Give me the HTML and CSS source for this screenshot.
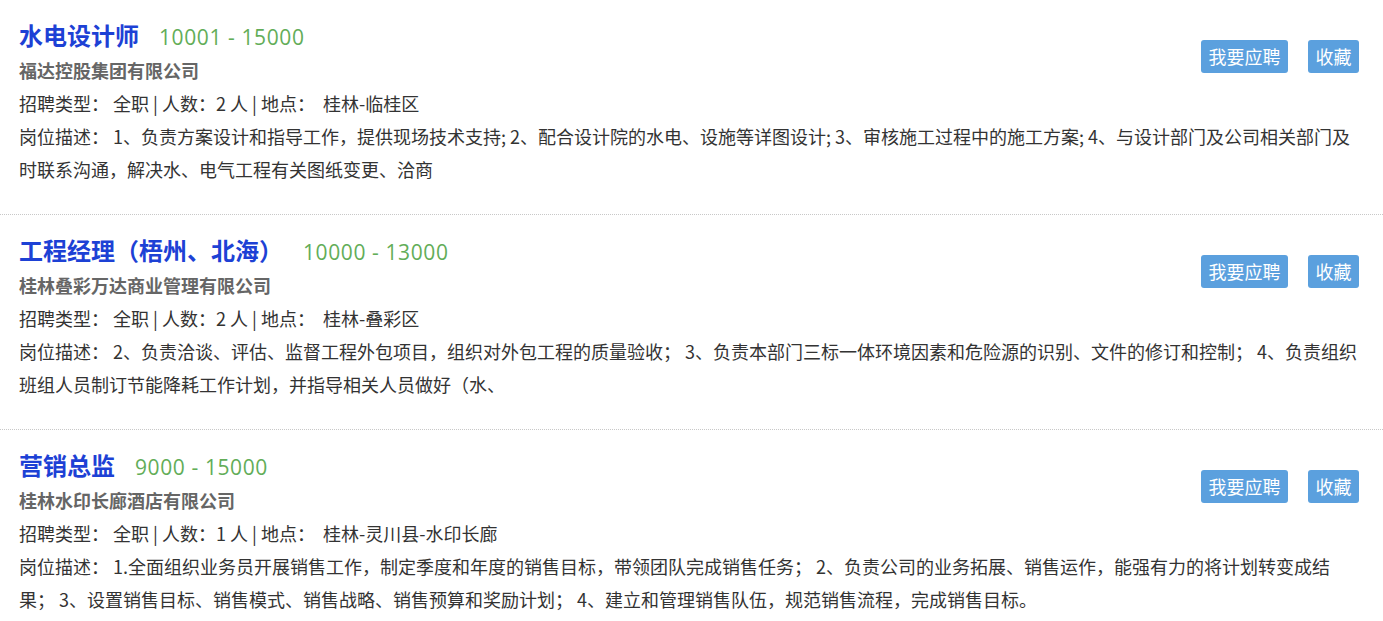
FILE: index.html
```html
<!DOCTYPE html>
<html lang="zh-CN">
<head>
  <meta charset="UTF-8">
  <title>招聘信息</title>
  <meta name="viewport" content="width=device-width, initial-scale=1">
  <link rel="stylesheet" href="styles.css">
</head>
<body>
  <ul class="job-list">
    <li class="job">
      <div class="job-head">
        <h2 class="job-title">水电设计师<span class="salary">10001 - 15000</span></h2>
        <div class="company">福达控股集团有限公司</div>
      </div>
      <div class="job-actions">
        <a class="btn" href="#">我要应聘</a>
        <a class="btn" href="#">收藏</a>
      </div>
      <div class="job-meta">招聘类型： 全职 | 人数：2 人 | 地点：&nbsp; 桂林-临桂区</div>
      <div class="job-desc">岗位描述： 1、负责方案设计和指导工作，提供现场技术支持; 2、配合设计院的水电、设施等详图设计; 3、审核施工过程中的施工方案; 4、与设计部门及公司相关部门及时联系沟通，解决水、电气工程有关图纸变更、洽商</div>
    </li>
    <li class="job">
      <div class="job-head">
        <h2 class="job-title">工程经理（梧州、北海）<span class="salary">10000 - 13000</span></h2>
        <div class="company">桂林叠彩万达商业管理有限公司</div>
      </div>
      <div class="job-actions">
        <a class="btn" href="#">我要应聘</a>
        <a class="btn" href="#">收藏</a>
      </div>
      <div class="job-meta">招聘类型： 全职 | 人数：2 人 | 地点：&nbsp; 桂林-叠彩区</div>
      <div class="job-desc">岗位描述： 2、负责洽谈、评估、监督工程外包项目，组织对外包工程的质量验收； 3、负责本部门三标一体环境因素和危险源的识别、文件的修订和控制； 4、负责组织班组人员制订节能降耗工作计划，并指导相关人员做好（水、</div>
    </li>
    <li class="job">
      <div class="job-head">
        <h2 class="job-title">营销总监<span class="salary">9000 - 15000</span></h2>
        <div class="company">桂林水印长廊酒店有限公司</div>
      </div>
      <div class="job-actions">
        <a class="btn" href="#">我要应聘</a>
        <a class="btn" href="#">收藏</a>
      </div>
      <div class="job-meta">招聘类型： 全职 | 人数：1 人 | 地点：&nbsp; 桂林-灵川县-水印长廊</div>
      <div class="job-desc">岗位描述： 1.全面组织业务员开展销售工作，制定季度和年度的销售目标，带领团队完成销售任务； 2、负责公司的业务拓展、销售运作，能强有力的将计划转变成结果； 3、设置销售目标、销售模式、销售战略、销售预算和奖励计划； 4、建立和管理销售队伍，规范销售流程，完成销售目标。</div>
    </li>
  </ul>
</body>
</html>
```

FILE: styles.css
```css
html, body {
  margin: 0;
  padding: 0;
}
body {
  background: #fff;
  color: #333;
  font-family: "Noto Sans CJK SC", "Noto Sans", sans-serif;
  font-size: 18px;
}
.job-list {
  list-style: none;
  margin: 0;
  padding: 0;
}
.job {
  display: grid;
  grid-template-columns: 1fr auto;
  padding: 18px 18px 28px 19px;
  border-bottom: 1px dotted #c8c8c8;
}
.job:last-child {
  border-bottom: none;
  padding-bottom: 0;
}
.job-head {
  grid-column: 1;
  grid-row: 1;
}
.job-title {
  margin: 0;
  font-size: 24px;
  line-height: 34px;
  font-weight: 700;
  color: #1d41d5;
}
.salary {
  margin-left: 20px;
  font-family: "Open Sans", "Noto Sans", sans-serif;
  font-size: 21px;
  font-weight: 400;
  letter-spacing: 0.6px;
  color: #62ad58;
}
.company {
  font-size: 18px;
  line-height: 33px;
  font-weight: 700;
  color: #666;
}
.job-actions {
  grid-column: 2;
  grid-row: 1;
  align-self: start;
  display: flex;
  gap: 20px;
  margin-top: 22px;
  margin-right: 6px;
}
.btn {
  display: block;
  height: 33px;
  line-height: 33px;
  padding: 0 7.5px;
  border-radius: 3px;
  background: #5ba0de;
  color: #fff;
  font-size: 18px;
  text-decoration: none;
}
.job-meta, .job-desc {
  grid-column: 1 / 3;
  line-height: 33px;
}
```
